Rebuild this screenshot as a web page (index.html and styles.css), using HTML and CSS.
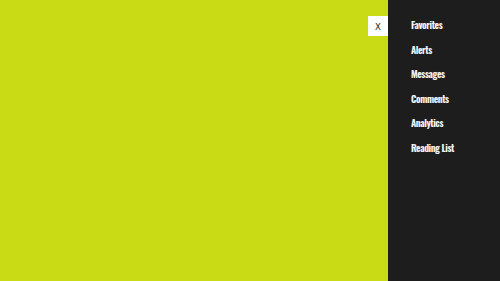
FILE: index.html
```html
<!DOCTYPE html>
<html lang="en">
  <head>
    <meta charset="UTF-8" />
    <title>Sidebar</title>
    <link rel="stylesheet" href="styles.css">
  </head>
  <body>
    <div class="page">
      <main class="content"></main>

      <!-- Side navigation -->
      <aside class="sidenav">
        <button class="close-btn">X</button>
        <ul class="nav-list">
          <li><a href="#">Favorites</a></li>
          <li><a href="#">Alerts</a></li>
          <li><a href="#">Messages</a></li>
          <li><a href="#">Comments</a></li>
          <li><a href="#">Analytics</a></li>
          <li><a href="#">Reading List</a></li>
        </ul>
      </aside>
    </div>
  </body>
</html>
```

FILE: styles.css
```css
html,
body {
  margin: 0;
  padding: 0;
  height: 100%;
}

body {
  font-family: "Oswald", "Liberation Sans Narrow", sans-serif;
  background: #c8db14;
}

.page {
  display: flex;
  height: 100%;
}

.content {
  flex: 1;
  background: #c8db14;
}

.sidenav {
  width: 112px;
  background: #1d1d1d;
  position: relative;
}

.close-btn {
  position: absolute;
  top: 16px;
  left: -20px;
  width: 20px;
  height: 20px;
  padding: 2px 0 0;
  border: none;
  background: #ffffff;
  color: #222;
  font-family: "DejaVu Sans", sans-serif;
  font-size: 8.5px;
  line-height: 18px;
  text-align: center;
}

.nav-list {
  list-style: none;
  margin: 0;
  padding: 13px 0 0 23px;
}

.nav-list li {
  height: 24.6px;
  line-height: 18px;
}

.nav-list a {
  color: #f2f2f2;
  text-decoration: none;
  font-size: 9.5px;
  font-weight: bold;
  letter-spacing: -0.4px;
}
```
